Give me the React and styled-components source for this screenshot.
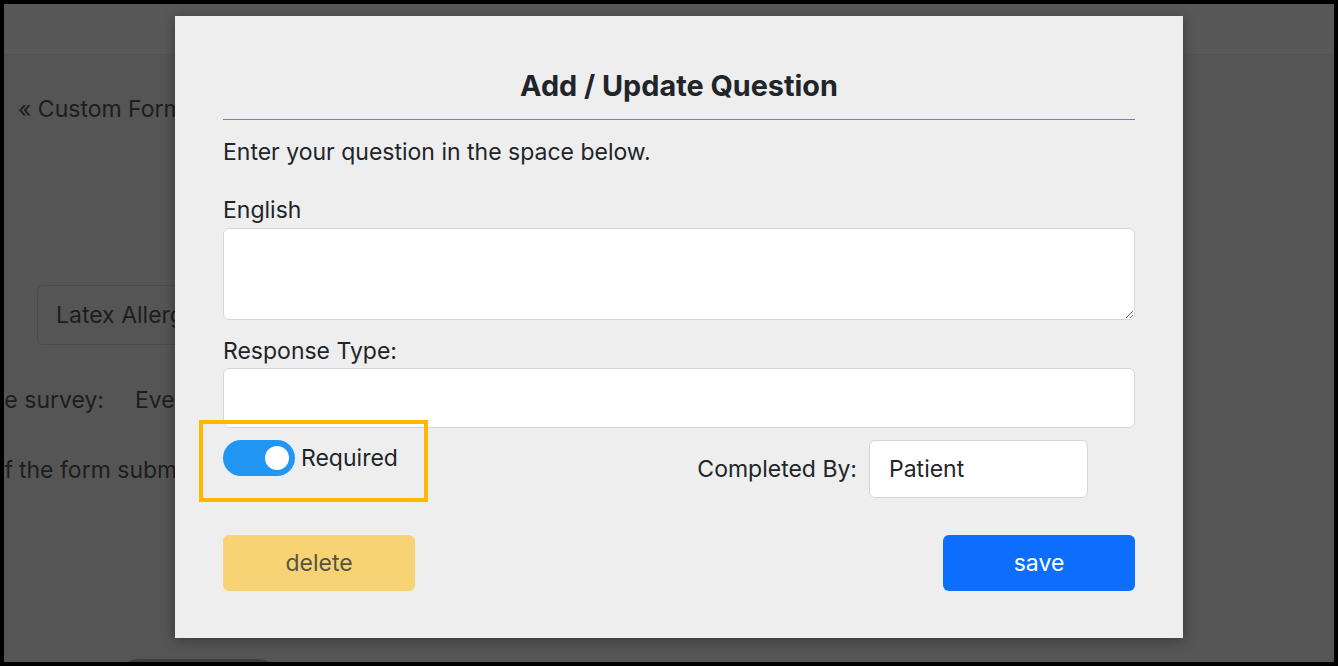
import { createGlobalStyle, styled } from 'styled-components';

const GlobalStyle = createGlobalStyle`
  html, body {
    margin: 0;
    padding: 0;
  }

  body {
    font-family: Inter, "Noto Sans", "Liberation Sans", sans-serif;
    color: #212529;
  }

  * {
    box-sizing: border-box;
  }
`;

function App() {
  return (
    <>
      <GlobalStyle />
      <Frame>
        <PageHeader />
        <PageBody>
          <BackLink>« Custom Form Builder</BackLink>
          <QuestionChip>Latex Allergy Questionnaire</QuestionChip>
          <PageRow $top={38}>
            <PageLabel $width={100}>Show the survey:</PageLabel>
            <PageValue $gap={31}>Every visit</PageValue>
          </PageRow>
          <PageRow $top={36}>
            <PageLabel $width={9}>Email a copy of</PageLabel>
            <PageValue $gap={6}>the form submission to the office</PageValue>
          </PageRow>
          <PageButton aria-label="Add question" />
        </PageBody>

        <Modal role="dialog" aria-modal="true">
          <Title>Add / Update Question</Title>
          <Divider />
          <Intro>Enter your question in the space below.</Intro>

          <FieldLabel $top={24}>English</FieldLabel>
          <TextArea />

          <FieldLabel $top={14}>Response Type:</FieldLabel>
          <TextInput type="text" />

          <OptionsRow>
            <ToggleWrap>
              <Switch role="switch" aria-checked="true" $on>
                <span className="knob" />
              </Switch>
              <span>Required</span>
              <Highlight />
            </ToggleWrap>

            <CompletedGroup>
              <span>Completed By:</span>
              <SelectBox type="text" defaultValue="Patient" readOnly />
            </CompletedGroup>
          </OptionsRow>

          <Actions>
            <ActionButton $variant="warning" disabled>
              delete
            </ActionButton>
            <ActionButton $variant="primary">save</ActionButton>
          </Actions>
        </Modal>
      </Frame>
    </>
  );
}

const Frame = styled.div`
  position: relative;
  width: 1338px;
  height: 666px;
  border: 4px solid #000;
  background-color: #555555;
  overflow: hidden;
`;

const PageHeader = styled.header`
  height: 51px;
  background-color: #585858;
  border-bottom: 1px solid #525252;
`;

const PageBody = styled.main`
  display: flex;
  flex-direction: column;
  align-items: flex-start;
  color: #1d1d1d;
  font-size: 23px;
  line-height: 34px;
`;

const BackLink = styled.span`
  margin: 37px 0 0 14px;
  white-space: nowrap;
`;

const QuestionChip = styled.div`
  margin: 159px 0 0 33px;
  width: 420px;
  height: 60px;
  padding: 0 18px;
  display: flex;
  align-items: center;
  border: 1px solid #4a4a4a;
  border-radius: 6px;
  white-space: nowrap;
`;

const PageRow = styled.div`
  margin-top: ${({ $top }) => $top}px;
  display: flex;
  align-items: center;
  white-space: nowrap;
`;

const PageLabel = styled.div`
  width: ${({ $width }) => $width}px;
  display: flex;
  justify-content: flex-end;
`;

const PageValue = styled.div`
  margin-left: ${({ $gap }) => $gap}px;
`;

const PageButton = styled.button`
  margin: 172px 0 0 114px;
  width: 160px;
  height: 40px;
  border: none;
  border-radius: 20px;
  background-color: #3e3e3e;
`;

const Modal = styled.section`
  position: absolute;
  left: 171px;
  top: 12px;
  width: 1008px;
  padding: 53px 48px 47px;
  background-color: #eeeeee;
  box-shadow: 0 2px 12px rgba(0, 0, 0, 0.35);
  font-size: 23px;
  line-height: 34.5px;
  color: #212529;
`;

const Title = styled.h2`
  margin: 0;
  font-size: 28.8px;
  line-height: 34.5px;
  font-weight: 700;
  text-align: center;
`;

const Divider = styled.hr`
  margin: 15px 0 15px;
  border: none;
  border-top: 1px solid #4a8fd4;
  opacity: 1;
`;

const Intro = styled.p`
  margin: 0;
`;

const FieldLabel = styled.label`
  display: block;
  margin: ${({ $top }) => $top}px 0 0;
`;

const fieldBase = `
  display: block;
  width: 100%;
  border: 1px solid #d3d6db;
  border-radius: 6px;
  background-color: #fff;
  font: inherit;
  color: #212529;
  outline: none;
`;

const TextArea = styled.textarea`
  ${fieldBase}
  height: 92px;
  padding: 10px 20px;
  resize: vertical;
`;

const TextInput = styled.input`
  ${fieldBase}
  height: 60px;
  padding: 0 20px;
`;

const OptionsRow = styled.div`
  margin-top: 12px;
  display: flex;
  justify-content: space-between;
  align-items: flex-start;
`;

const ToggleWrap = styled.label`
  position: relative;
  display: flex;
  align-items: center;
  gap: 6px;
  height: 36px;
`;

const Switch = styled.span`
  position: relative;
  width: 72px;
  height: 36px;
  border-radius: 18px;
  background-color: ${({ $on }) => ($on ? '#2196f3' : '#ccc')};

  .knob {
    position: absolute;
    top: 6px;
    right: ${({ $on }) => ($on ? '6px' : '42px')};
    width: 24px;
    height: 24px;
    border-radius: 50%;
    background-color: #fff;
  }
`;

const Highlight = styled.span`
  position: absolute;
  left: -24px;
  top: -20px;
  right: -30px;
  bottom: -26px;
  border: 4px solid #fcb900;
  pointer-events: none;
`;

const CompletedGroup = styled.div`
  margin-right: 47px;
  display: flex;
  align-items: center;
  gap: 12px;
`;

const SelectBox = styled.input`
  ${fieldBase}
  width: 219px;
  height: 58px;
  padding: 0 19px;
`;

const Actions = styled.div`
  margin-top: 37px;
  display: flex;
  justify-content: space-between;
`;

const ActionButton = styled.button`
  width: 192px;
  height: 56px;
  border: none;
  border-radius: 6px;
  font: inherit;
  background-color: ${({ $variant }) =>
    $variant === 'warning' ? '#f8d374' : '#0d6efd'};
  color: ${({ $variant }) => ($variant === 'warning' ? '#56534c' : '#fff')};
  cursor: pointer;

  &:disabled {
    cursor: default;
  }
`;

export default App;
